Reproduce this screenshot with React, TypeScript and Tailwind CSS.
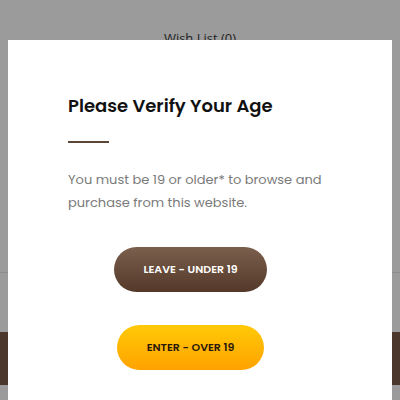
export default function App() {
  return (
    <div
      className="relative h-[400px] w-[400px] overflow-hidden bg-[#9b9b9b]"
      style={{ fontFamily: "Poppins, 'Noto Sans', sans-serif" }}
    >
      {/* page behind the dimmed overlay */}
      <div className="flex h-full flex-col">
        <div className="pt-[29px] text-center text-[13px] text-[#1e1e1e]" style={{ fontFamily: "'Open Sans', sans-serif" }}>
          Wish List (0)
        </div>
        <div className="mt-[223px] h-[1px] bg-[#8c8c8c]" />
        <div className="mt-[59px] h-[53px] bg-[#4b372b]" />
      </div>

      {/* age gate modal */}
      <div className="absolute left-[8px] top-[40px] flex h-[380px] w-[384px] flex-col bg-white px-[60px] pt-[52px]">
        <h1 className="text-[18px] font-semibold leading-[28px] text-[#111]">
          Please Verify Your Age
        </h1>
        <div className="mt-[21px] h-[2px] w-[41px] bg-[#5b4636]" />
        <p className="mt-[25px] text-[13px] leading-[23px] text-[#7a7a7a]">
          You must be 19 or older* to browse and purchase from this website.
        </p>
        <div className="mt-[33px] flex w-[245px] flex-col items-center gap-[33px]">
          <button className="h-[45px] w-[153px] rounded-full bg-gradient-to-b from-[#7b5f4d] to-[#54392a] text-[11px] font-semibold text-white">
            LEAVE - UNDER 19
          </button>
          <button className="h-[45px] w-[147px] rounded-full bg-gradient-to-b from-[#ffc907] to-[#ffa200] text-[11px] font-semibold text-[#2a1808]">
            ENTER - OVER 19
          </button>
        </div>
      </div>
    </div>
  );
}
